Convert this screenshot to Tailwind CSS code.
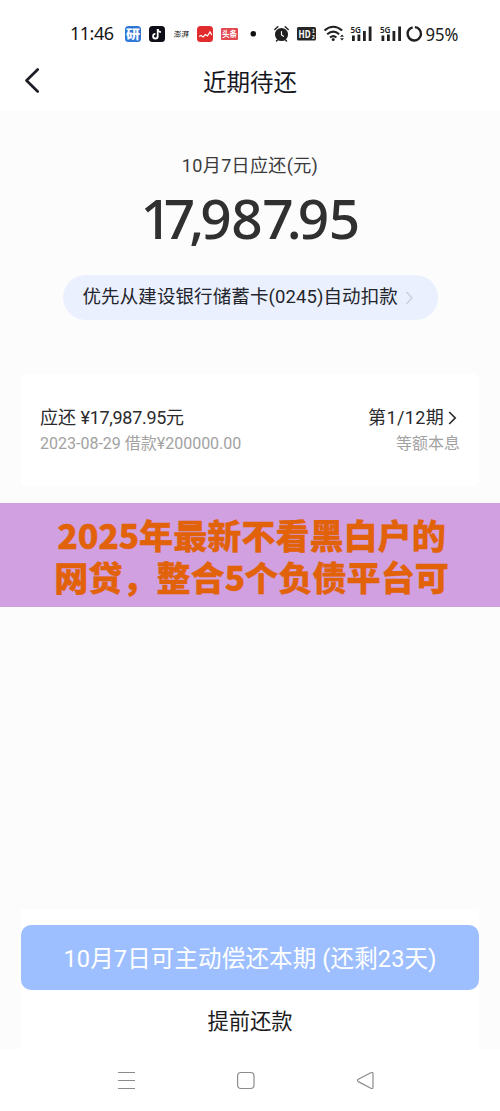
<!DOCTYPE html>
<html lang="zh-CN">
<head>
<meta charset="utf-8">
<meta name="viewport" content="width=device-width, initial-scale=1">
<title>近期待还</title>
<script src="https://cdn.jsdelivr.net/npm/@tailwindcss/browser@4"></script>
</head>
<body class="w-[500px] h-[1111px] overflow-hidden bg-[#fcfcfc] font-['Roboto','Noto_Sans_CJK_SC',sans-serif] text-[#2b2b2d] flex flex-col whitespace-nowrap">
<header class="bg-white h-[111px] shrink-0 flex flex-col">
  <div class="h-[55px] pt-[13px]">
    <svg class="block" width="500" height="42" viewBox="0 13 500 42" font-family="'Noto Sans','Noto Sans CJK SC',sans-serif">
      <text x="70" y="40" font-size="18" fill="#151515" textLength="44">11:46</text>
      <rect x="125" y="26" width="16" height="16" rx="3.5" fill="#2f77d6"/>
      <text x="126" y="38.500" font-size="12" font-weight="800" fill="#fff" textLength="14" lengthAdjust="spacingAndGlyphs">研</text>
      <rect x="149" y="26" width="16" height="16" rx="3.500" fill="#0d0e17"/>
      <path d="M157.700 29v7.200a2.300 2.300 0 1 1-2.300-2.300" fill="none" stroke="#fff" stroke-width="1.800"/>
      <path d="M157.700 29c.2 2 1.400 3 3.200 3.200" fill="none" stroke="#fff" stroke-width="1.800"/>
      <text x="173.500" y="37" font-size="7.500" fill="#333" textLength="15" font-weight="500" transform="skewX(-6)" style="transform-origin:173px 37px">澎湃</text>
      <rect x="197" y="26" width="16" height="16" rx="3.500" fill="#e22b2d"/>
      <path d="M199 36.500l2-1 2 1.500 2.500-2.500 2 1.500 2.500-4 1.800 3" fill="none" stroke="#fff" stroke-width="1.200"/>
      <rect x="221" y="28" width="17" height="12" rx="1" fill="#e24850"/>
      <text x="222" y="37.300" font-size="8.500" font-weight="700" fill="#fff" textLength="15" lengthAdjust="spacingAndGlyphs">头条</text>
      <circle cx="253.300" cy="33.700" r="2.800" fill="#111"/>
      <g stroke="#202020" fill="none" stroke-width="1.500" stroke-linecap="round">
        <circle cx="281.500" cy="34.500" r="5.800" fill="#202020"/>
        <path d="M274.800 29.500l3-2.700M288.200 29.500l-3-2.700M277.500 40l-1 1M285.500 40l1 1"/>
        <path d="M281.500 31.500v3.500l2 1.300" stroke="#fff" stroke-width="1.100"/>
      </g>
      <rect x="297" y="27" width="19" height="13.500" rx="1.500" fill="#262626"/>
      <text x="298.500" y="37.700" font-size="10.500" font-weight="700" fill="#fff" textLength="12" lengthAdjust="spacingAndGlyphs">HD</text>
      <g font-family="'Liberation Sans',sans-serif" font-size="5" font-weight="700" fill="#fff">
        <text x="312" y="33">1</text>
        <text x="312" y="39.200">2</text>
      </g>
      <g fill="none" stroke="#202020" stroke-width="2">
        <path d="M324.500 30.500q8.800-7.500 17.600 0M327.200 34.200q6.200-5.200 12 0M330 37.500q3.300-2.800 6.400 0"/>
      </g>
      <circle cx="333.200" cy="39.600" r="1.500" fill="#202020"/>
      <path d="M340 36.700l2-2.200 2 2.200zM340 38.300l2 2.200 2-2.200z" fill="#202020"/>
      <g fill="#202020">
        <text x="350.500" y="32.500" font-size="9" font-weight="600" textLength="10.500" lengthAdjust="spacingAndGlyphs">5G</text>
        <path d="M352 35.500h2.800V41H352zM357.500 34.500h2.800V41h-2.800zM363 31h2.800v10H363zM368.700 26.500h2.800V41h-2.800z"/>
        <text x="380" y="32.500" font-size="9" font-weight="600" textLength="10.500" lengthAdjust="spacingAndGlyphs">5G</text>
        <path d="M381.500 35.500h2.800V41h-2.800zM387 34.500h2.800V41H387zM392.500 31h2.800v10h-2.800zM398.200 26.500h2.800V41h-2.800z"/>
      </g>
      <circle cx="414.300" cy="33.800" r="6.700" fill="none" stroke="#202020" stroke-width="2.400" stroke-dasharray="39.600 2.500" transform="rotate(-85 414.300 33.800)"/>
      <text x="425.500" y="40.500" font-size="17.500" fill="#202020" textLength="33" lengthAdjust="spacingAndGlyphs">95%</text>
    </svg>
  </div>
  <div class="h-[56px] grid grid-cols-[1fr_auto_1fr] items-center">
    <svg class="ml-[23px] mb-[7px]" width="18" height="28" viewBox="0 0 18 28" fill="none" stroke="#1e1f26" stroke-width="2.700" stroke-linecap="round" stroke-linejoin="round"><path d="M14.700 3.500L3.500 14.500l11.200 11"/></svg>
    <h1 class="text-[23.500px] leading-[34px] text-[#17181f]">近期待还</h1>
  </div>
</header>
<main class="flex flex-col items-center">
  <p class="mt-[40px] h-[28px] leading-[29px] text-[18px] tracking-[0.350px] text-[#3b3b3d]">10月7日应还(元)</p>
  <p class="mt-[6px] h-[68px] leading-[66px] text-[55px] font-medium font-['Noto_Sans'] text-[#303030]"><span class="tracking-[-8px]">1</span><span class="tracking-[-6px]">7</span><span class="tracking-[-4px]">,</span><span class="tracking-[-0.500px]">98</span><span class="tracking-[-7px]">7</span><span class="tracking-[-4px]">.</span><span class="tracking-[-0.500px]">95</span></p>
  <div class="mt-[22px] w-[375px] h-[45px] rounded-full bg-[#ebf0fe] flex items-center pl-[20px] text-[18.500px] tracking-[0.100px] text-[#23252c]">
    <span class="pt-[1px]">优先从建设银行储蓄卡(0245)自动扣款</span>
    <svg class="ml-[7px]" width="9" height="14" viewBox="0 0 9 14" fill="none" stroke="#c9ced9" stroke-width="1.300"><path d="M1.500 1l5.500 6-5.500 6"/></svg>
  </div>
  <section class="mt-[54px] w-[458px] h-[112px] bg-white rounded-md px-[19px] pt-[30px] flex justify-between">
    <div>
      <p class="h-[27px] leading-[27px] text-[18px]">应还 <span class="tracking-[-0.300px]">¥17,987.95</span>元</p>
      <p class="h-[25px] leading-[26px] text-[16px] text-[#a2a2a2]">2023-08-29 借款¥200000.00</p>
    </div>
    <div class="flex flex-col items-end">
      <p class="h-[27px] leading-[27px] text-[18px] flex items-center"><span class="tracking-[0.350px]">第1/12期</span><svg class="ml-[4px] mr-[3px]" width="9" height="14" viewBox="0 0 9 14" fill="none" stroke="#2b2b2d" stroke-width="1.700"><path d="M1.200 1l6 6-6 6"/></svg></p>
      <p class="h-[25px] leading-[26px] text-[16px] text-[#a2a2a2]">等额本息</p>
    </div>
  </section>
  <div class="mt-[17px] w-full h-[104px] bg-[#d0a0e0] pt-[10px] pl-[3px] text-center font-['Noto_Sans_CJK_SC',sans-serif] font-black text-[34.100px] leading-[42px] text-[#e2620a] [-webkit-text-stroke:0.300px_#e2620a]"><span class="tracking-[-0.300px]">2025</span>年最新不看黑白户的<br>网贷，整合<span class="tracking-[-1px]">5</span>个负债平台可</div>
</main>
<footer class="mt-auto w-full shrink-0">
  <div class="mx-[21px] h-[140px] bg-white pt-[16px] text-center">
    <div class="h-[65px] rounded-[10px] bg-[#9ebfff] text-white text-[23.500px] tracking-[0.150px] leading-[68px]">10月7日可主动偿还本期 (还剩23天)</div>
    <div class="h-[59px] leading-[63px] text-[21.300px] text-[#1c1c1e]">提前还款</div>
  </div>
  <nav class="h-[62px] bg-white">
    <svg class="block" width="500" height="62" viewBox="0 1049 500 62" fill="none" stroke="#8b8b8b" stroke-width="1.200" stroke-linejoin="round"><path d="M118 1072.500h17M118 1080.500h17M118 1088.500h17"/><rect x="237.600" y="1072.500" width="16.400" height="16" rx="3.500"/><path d="M358.300 1079.300l12.500-6.600q2.200-.8 2.200 1.300v13q0 2.100-2.200 1.200l-12.500-6.600q-1.700-1.200 0-2.300z"/></svg>
  </nav>
</footer>
</body>
</html>
